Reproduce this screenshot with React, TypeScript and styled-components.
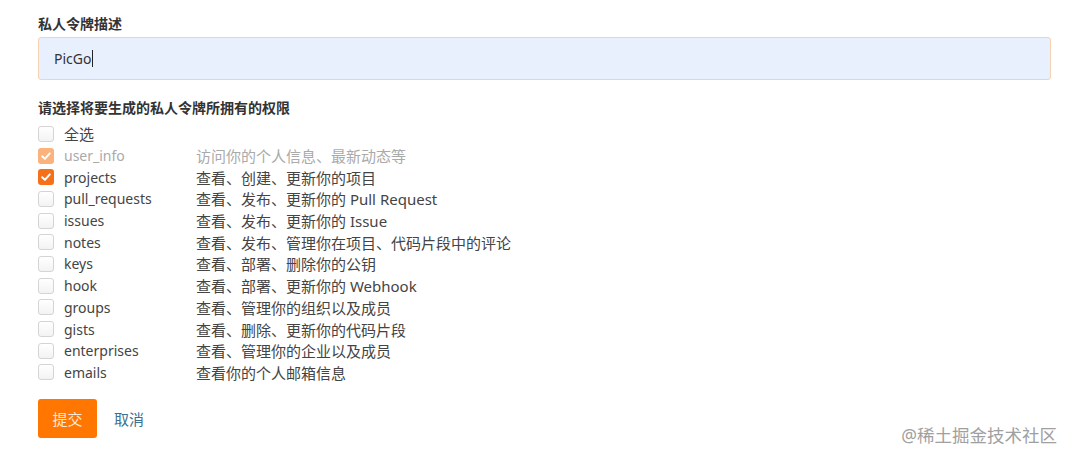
import React from 'react';
import styled, { createGlobalStyle } from 'styled-components';

const GlobalStyle = createGlobalStyle`
  html, body {
    margin: 0;
    padding: 0;
    background: #fff;
  }
  body {
    font-family: "Noto Sans", "Noto Sans CJK SC", sans-serif;
    font-size: 14px;
    color: #444;
  }
`;

const Page = styled.div`
  position: relative;
  width: 1072px;
  height: 461px;
  box-sizing: border-box;
  padding: 14px 21px 0 38px;
  display: flex;
  flex-direction: column;
`;

const FieldLabel = styled.div<{ $gap?: number }>`
  font-weight: 700;
  font-size: 14px;
  line-height: 20px;
  color: #333;
  margin-top: ${(p) => p.$gap ?? 0}px;
`;

const TextInput = styled.div`
  margin-top: 3px;
  height: 43px;
  box-sizing: border-box;
  border: 1px solid #f6d2b4;
  border-radius: 3px;
  background: #e8f0fe;
  padding-left: 15px;
  display: flex;
  align-items: center;
  font-size: 14px;
  color: #333;
`;

const Caret = styled.span`
  display: inline-block;
  width: 1px;
  height: 17px;
  background: #222;
  margin-left: 1px;
`;

const List = styled.div`
  margin-top: 5px;
  display: flex;
  flex-direction: column;
`;

const Row = styled.div<{ $muted?: boolean }>`
  height: 21.7px;
  display: flex;
  align-items: center;
  color: ${(p) => (p.$muted ? '#aaa' : '#444')};
`;

const Box = styled.span<{ $checked?: boolean; $disabled?: boolean }>`
  width: 16px;
  height: 16px;
  box-sizing: border-box;
  border-radius: 3px;
  flex-shrink: 0;
  display: flex;
  align-items: center;
  justify-content: center;
  border: 1px solid ${(p) => (p.$checked ? 'transparent' : '#d4d4d4')};
  background: ${(p) =>
    p.$checked ? (p.$disabled ? '#fbb27c' : '#f6701a') : 'linear-gradient(#fff, #f3f3f3)'};
`;

const Name = styled.span<{ $cjk?: boolean }>`
  width: 132px;
  margin-left: 10px;
  flex-shrink: 0;
  font-size: ${(p) => (p.$cjk ? 15 : 14)}px;
`;

const Desc = styled.span`
  font-size: 15px;
`;

const Actions = styled.div`
  margin-top: 16px;
  display: flex;
  align-items: center;
  gap: 17px;
`;

const SubmitButton = styled.button`
  width: 59px;
  height: 39px;
  border: none;
  border-radius: 3px;
  background: #ff7600;
  color: #ffe9d8;
  font-family: inherit;
  font-size: 15px;
  padding: 0;
`;

const CancelLink = styled.span`
  color: #3f6f8f;
  font-size: 15px;
`;

const Watermark = styled.div`
  position: absolute;
  right: 15px;
  bottom: 14px;
  font-size: 17.5px;
  color: #a0a0a0;
`;

const Check = () => (
  <svg width="12" height="12" viewBox="0 0 12 12">
    <path d="M2.2 6.2 L4.9 8.8 L9.8 3.4" fill="none" stroke="#fff" strokeWidth="2" strokeLinecap="round" strokeLinejoin="round" />
  </svg>
);

const scopes: { name: string; desc: string; checked?: boolean; disabled?: boolean }[] = [
  { name: '全选', desc: '' },
  { name: 'user_info', desc: '访问你的个人信息、最新动态等', checked: true, disabled: true },
  { name: 'projects', desc: '查看、创建、更新你的项目', checked: true },
  { name: 'pull_requests', desc: '查看、发布、更新你的 Pull Request' },
  { name: 'issues', desc: '查看、发布、更新你的 Issue' },
  { name: 'notes', desc: '查看、发布、管理你在项目、代码片段中的评论' },
  { name: 'keys', desc: '查看、部署、删除你的公钥' },
  { name: 'hook', desc: '查看、部署、更新你的 Webhook' },
  { name: 'groups', desc: '查看、管理你的组织以及成员' },
  { name: 'gists', desc: '查看、删除、更新你的代码片段' },
  { name: 'enterprises', desc: '查看、管理你的企业以及成员' },
  { name: 'emails', desc: '查看你的个人邮箱信息' },
];

const App: React.FC = () => {
  return (
    <>
      <GlobalStyle />
      <Page>
        <FieldLabel>私人令牌描述</FieldLabel>
        <TextInput>
          PicGo<Caret />
        </TextInput>
        <FieldLabel $gap={18}>请选择将要生成的私人令牌所拥有的权限</FieldLabel>
        <List>
          {scopes.map((s) => (
            <Row key={s.name} $muted={s.disabled}>
              <Box $checked={s.checked} $disabled={s.disabled}>
                {s.checked && <Check />}
              </Box>
              <Name $cjk={!s.desc}>{s.name}</Name>
              <Desc>{s.desc}</Desc>
            </Row>
          ))}
        </List>
        <Actions>
          <SubmitButton>提交</SubmitButton>
          <CancelLink>取消</CancelLink>
        </Actions>
        <Watermark>@稀土掘金技术社区</Watermark>
      </Page>
    </>
  );
};

export default App;
